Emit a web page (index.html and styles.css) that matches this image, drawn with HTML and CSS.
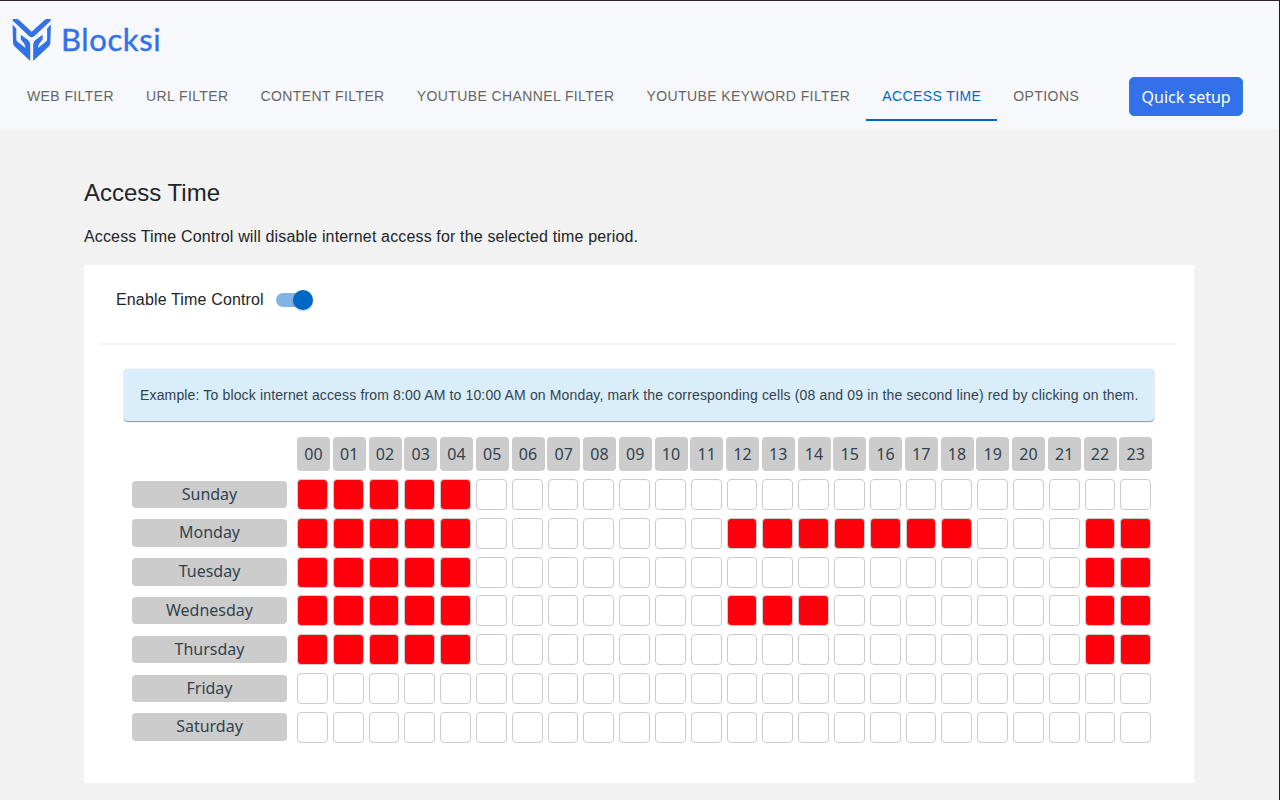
FILE: index.html
```html
<!DOCTYPE html>
<html lang="en">
<head>
    <meta charset="UTF-8">
    <meta name="viewport" content="width=device-width, initial-scale=1.0">
    <title>Blocksi - Access Time</title>
    <link rel="stylesheet" href="styles.css">
</head>
<body>
    <header class="header">
        <div class="logo">
            <svg class="logo-mark" viewBox="0 0 40 44" fill="#3371ea">
                <path d="M.8 1H5Q6 1 7 2l12.700 11.800L32.500 2q1-1 2-1h4.200v1.800L22.200 18.200q-2.500 2-5 0L.8 2.800z"/>
                <path d="M.5 6.500L4.300 10.500v10.500q0 1.500 1 2.500l8.200 6.500q-.2-3-1.800-5L8.800 21.500V16.800l7.200 5.200q2.200 1.700 2.200 4.500V43L3 28.800Q1 27 1 24.500z"/>
                <path d="M38.900 6.500L35.100 10.500v10.500q0 1.500-1 2.500l-8.200 6.500q.2-3 1.800-5l2.900-3.500V16.800L23.400 22q-2.200 1.700-2.200 4.500V43L36.400 28.800q2-1.800 2-4.300z"/>
            </svg>
            <span class="logo-text">Blocksi</span>
        </div>
        <nav class="nav">
            <a class="tab">WEB FILTER</a>
            <a class="tab">URL FILTER</a>
            <a class="tab">CONTENT FILTER</a>
            <a class="tab">YOUTUBE CHANNEL FILTER</a>
            <a class="tab">YOUTUBE KEYWORD FILTER</a>
            <a class="tab active">ACCESS TIME</a>
            <a class="tab">OPTIONS</a>
            <button class="setup">Quick setup</button>
        </nav>
    </header>

    <main class="content">
        <h1>Access Time</h1>
        <p class="intro">Access Time Control will disable internet access for the selected time period.</p>

        <section class="card">
            <div class="enable">
                <span class="enable-label">Enable Time Control</span>
                <span class="switch"></span>
            </div>
            <div class="example">Example: To block internet access from 8:00 AM to 10:00 AM on Monday, mark the corresponding cells (08 and 09 in the second line) red by clicking on them.</div>
            <div class="hours" id="hours"></div>
            <div id="days"></div>
        </section>
    </main>

    <script>
        const night = [0, 1, 2, 3, 4];
        const blocked = {
            Sunday: night,
            Monday: [...night, 12, 13, 14, 15, 16, 17, 18, 22, 23],
            Tuesday: [...night, 22, 23],
            Wednesday: [...night, 12, 13, 14, 22, 23],
            Thursday: [...night, 22, 23],
            Friday: [],
            Saturday: []
        };
        const hours = document.getElementById('hours');
        const days = document.getElementById('days');

        for (let h = 0; h < 24; h++) {
            const hour = document.createElement('span');
            hour.className = 'hour';
            hour.textContent = String(h).padStart(2, '0');
            hours.appendChild(hour);
        }

        for (const name in blocked) {
            const row = document.createElement('div');
            row.className = 'day-row';
            const label = document.createElement('span');
            label.className = 'day';
            label.textContent = name;
            row.appendChild(label);
            for (let h = 0; h < 24; h++) {
                const cell = document.createElement('span');
                cell.className = blocked[name].includes(h) ? 'cell blocked' : 'cell';
                cell.onclick = () => cell.classList.toggle('blocked');
                row.appendChild(cell);
            }
            days.appendChild(row);
        }
    </script>
</body>
</html>
```
FILE: styles.css
```css
* {
    box-sizing: border-box;
}
body {
    margin: 0;
    height: 100vh;
    background: #f2f2f2;
    color: #212529;
    font-family: "Liberation Sans", Arial, sans-serif;
    border-top: 1px solid #2b2430;
    border-right: 1px solid #1c1c20;
    overflow: hidden;
}
.header {
    height: 128px;
    background: #f7f8fb;
}
.logo {
    display: flex;
    height: 72px;
    padding: 17px 0 0 12px;
}
.logo-mark {
    width: 40px;
    height: 44px;
}
.logo-text {
    margin-left: 9px;
    color: #3371ea;
    font-family: Lato, sans-serif;
    font-size: 31px;
    font-weight: 400;
    letter-spacing: 0.6px;
    line-height: 43px;
    -webkit-text-stroke: 0.4px #3371ea;
}
.nav {
    display: flex;
    padding-left: 11px;
}
.tab {
    height: 48px;
    padding: 0 16px;
    color: #666;
    font-size: 14px;
    letter-spacing: 0.4px;
    line-height: 46px;
    white-space: nowrap;
}
.tab.active {
    color: #0069c8;
    border-bottom: 2px solid #0069c8;
}
.setup {
    width: 114px;
    height: 39px;
    margin: 4px 0 0 34px;
    padding: 0;
    border: 1px solid #2a80cc;
    border-radius: 5px;
    background: #3371ea;
    color: #fff;
    font-family: "Noto Sans", sans-serif;
    font-size: 16px;
}
.content {
    width: 1110px;
    margin-left: 84px;
    padding-top: 48px;
}
h1 {
    margin: 0;
    font-size: 24px;
    font-weight: 400;
    line-height: 32px;
}
.intro {
    margin: 16px 0 0;
    font-size: 16px;
    letter-spacing: 0.15px;
    line-height: 24px;
}
.card {
    height: 518px;
    margin-top: 16px;
    padding: 0 17px 0 16px;
    background: #fff;
}
.enable {
    display: flex;
    align-items: center;
    height: 80px;
    padding: 0 0 8px 16px;
    border-bottom: 2px solid #f4f4f4;
}
.enable-label {
    font-size: 16px;
    letter-spacing: 0.15px;
}
.switch {
    display: flex;
    align-items: center;
    justify-content: flex-end;
    width: 36px;
    height: 14px;
    margin-left: 12px;
    border-radius: 7px;
    background: #80b4e4;
}
.switch::after {
    content: "";
    flex: none;
    width: 20px;
    height: 20px;
    margin-right: -1px;
    border-radius: 50%;
    background: #0069c8;
    box-shadow: 0 1px 2px rgba(0, 0, 0, 0.25);
}
.example {
    width: 1030px;
    height: 52px;
    margin: 24px 0 0 24px;
    padding-left: 16px;
    border-radius: 4px;
    background: #daedfb;
    box-shadow: 0 1px 1px rgba(0, 0, 0, 0.4), 0 0 2px rgba(0, 0, 0, 0.15);
    color: #32434e;
    font-size: 14px;
    letter-spacing: 0.15px;
    line-height: 52px;
    white-space: nowrap;
}
.hours, .day-row {
    display: grid;
    color: #32434e;
    font-family: "Noto Sans", sans-serif;
    font-size: 16px;
    text-align: center;
}
.hours {
    grid-template-columns: repeat(24, 35.75px);
    height: 34px;
    margin: 16px 0 8px 197px;
}
.hour {
    width: 33px;
    border-radius: 4px;
    background: #ccc;
    line-height: 34px;
}
.day-row {
    grid-template-columns: 165px repeat(24, 35.81px);
    height: 38.83px;
    margin-left: 32px;
}
.day {
    width: 155px;
    height: 27.5px;
    margin-top: 1.5px;
    border-radius: 4px;
    background: #ccc;
    line-height: 27px;
}
.cell {
    width: 30.8px;
    height: 31px;
    border: 1px solid #ccc;
    border-radius: 4px;
    background: #fff;
}
.cell.blocked {
    background: #ff000d;
}
```
